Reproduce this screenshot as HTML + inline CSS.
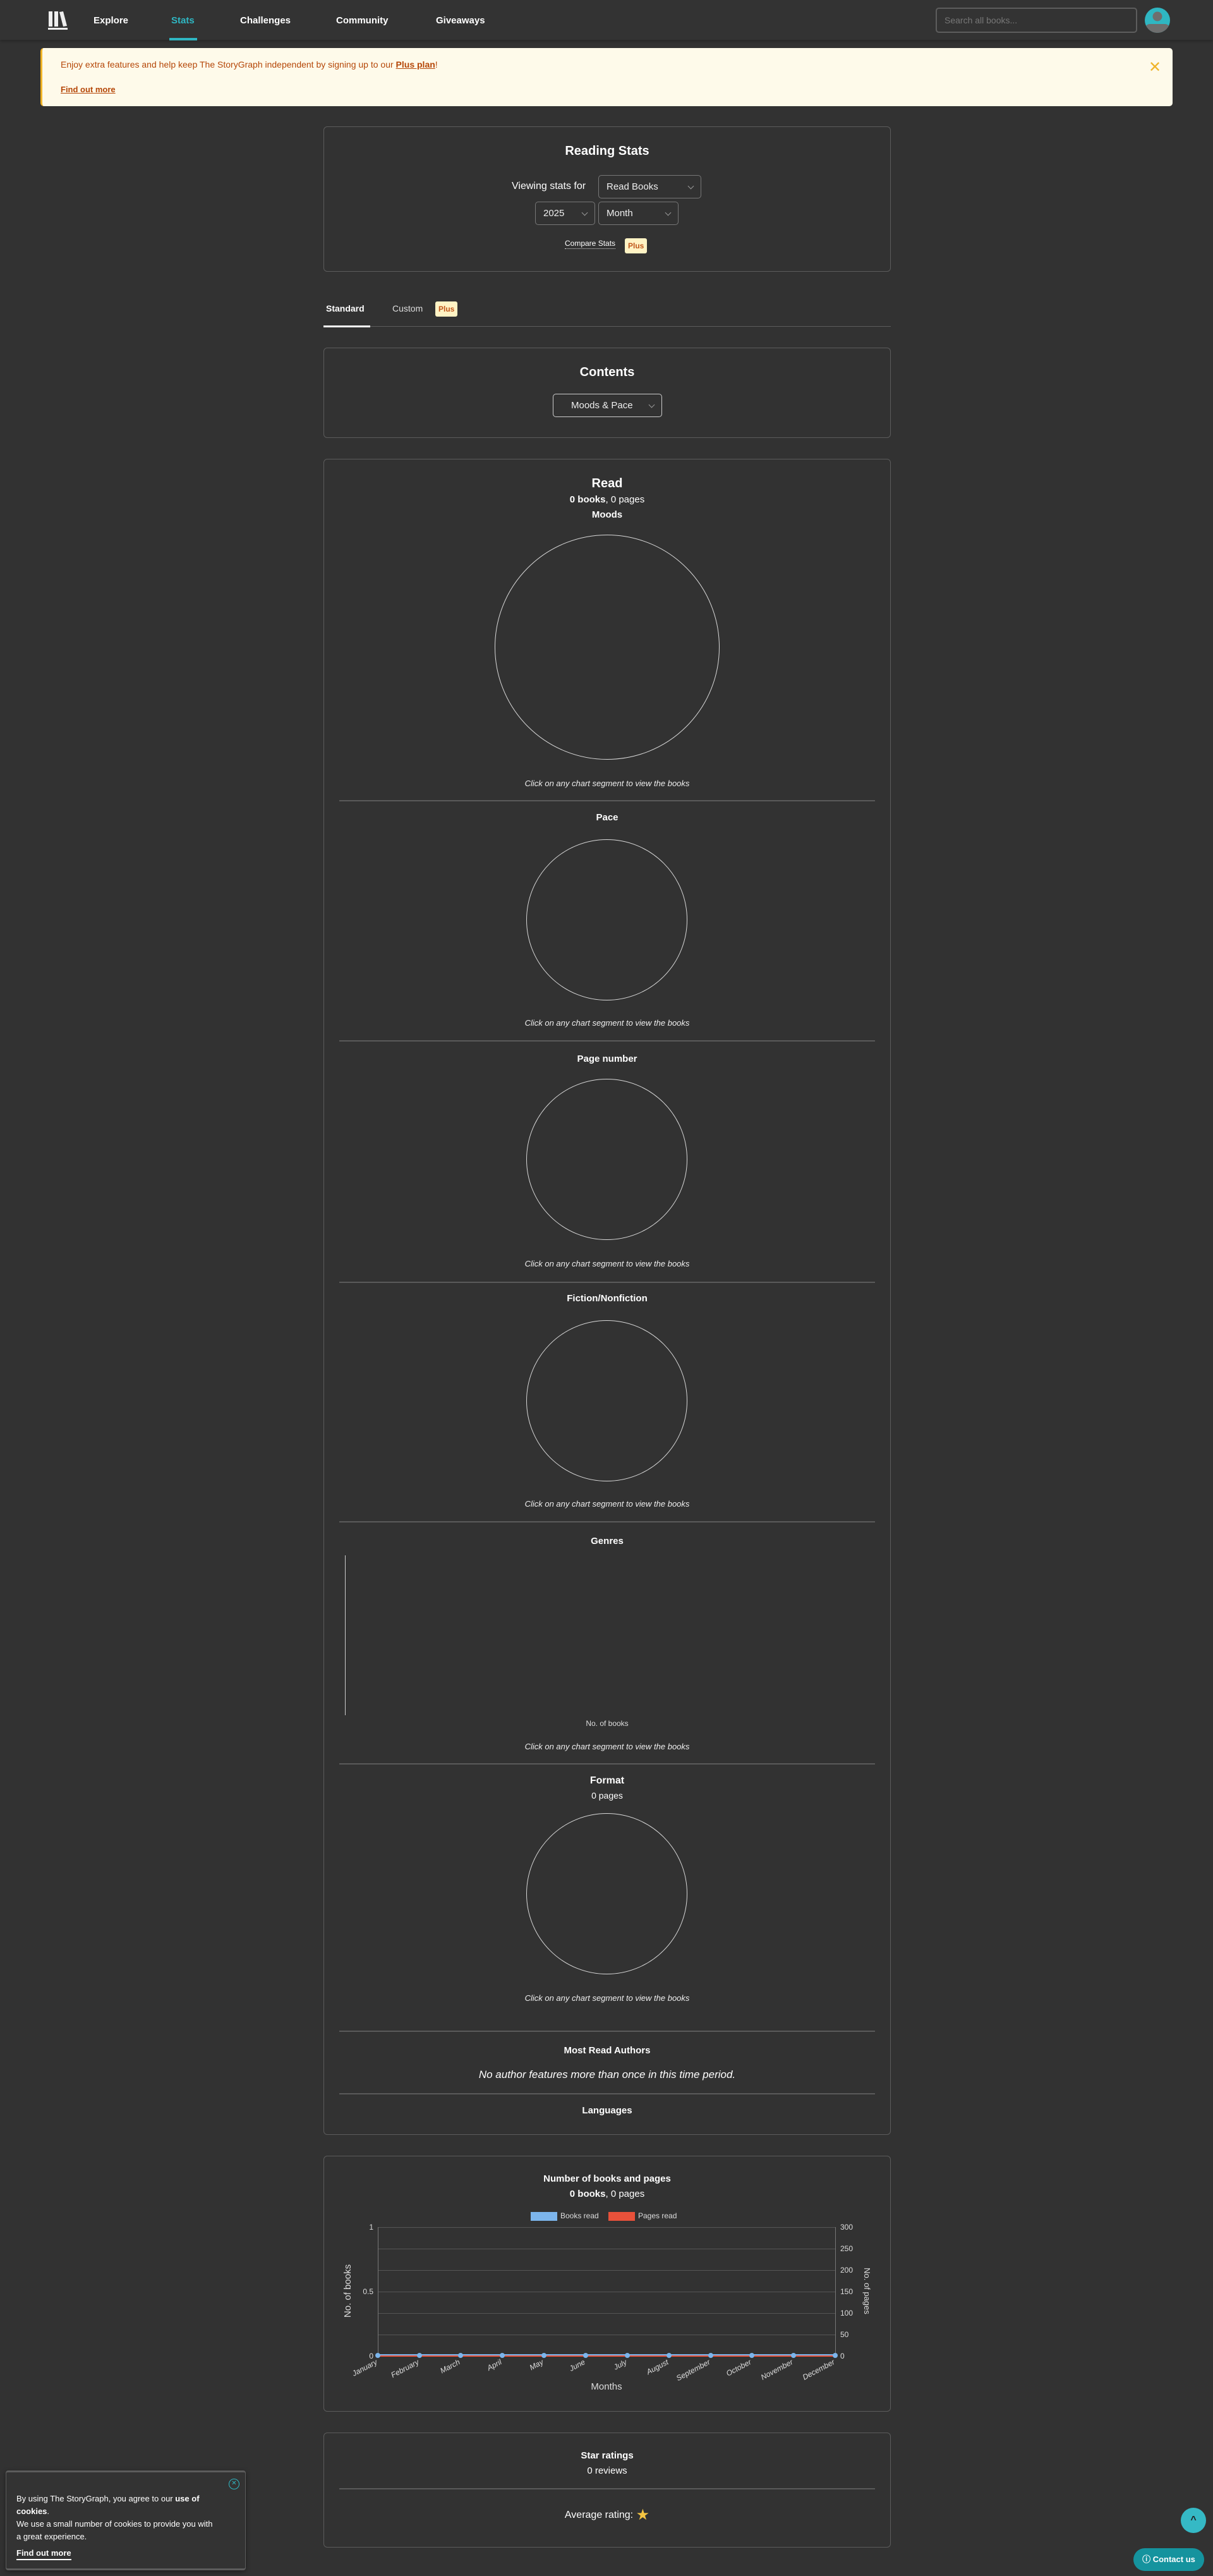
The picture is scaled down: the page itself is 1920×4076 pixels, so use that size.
<!DOCTYPE html>
<html><head><meta charset="utf-8"><style>
*{box-sizing:border-box;margin:0;padding:0}
body{width:1920px;height:4076px;background:#323232;font-family:"Liberation Sans",sans-serif;color:#fff;position:relative;overflow:hidden}
.a{position:absolute}
.c{position:absolute;left:512px;width:898px;text-align:center;line-height:20px;height:20px}
.b{font-weight:bold}
.box{position:absolute;left:512px;width:898px;border:1px solid #5c5c5c;border-radius:6px}
.hr{position:absolute;left:537px;width:848px;height:2px;background:#5a5a5a}
.sel{position:absolute;border:1px solid #777;border-radius:5px;height:37px;font-size:15px;line-height:35px;padding-left:12px;color:#eee}
.sel:after{content:"";position:absolute;right:12px;top:13px;width:6px;height:6px;border-right:1px solid #999;border-bottom:1px solid #999;transform:rotate(45deg)}
.plus{display:inline-block;background:#fff3c4;color:#c0561a;font-size:12px;font-weight:bold;border-radius:3px;padding:0 5px;line-height:24px;height:24px}
.circ{position:absolute;border:1.5px solid #d8d8d8;border-radius:50%}
.it{font-style:italic;font-size:13px;color:#eee}
</style></head><body>
<!-- nav -->
<div class="a" style="left:0;top:0;width:1920px;height:63px;background:#333;box-shadow:0 2px 4px rgba(0,0,0,.25)"></div>
<svg class="a" style="left:76px;top:17px" width="34" height="31" viewBox="0 0 34 31"><rect x="1" y="1" width="6" height="24" fill="#eee"/><rect x="10" y="1" width="6" height="24" fill="#eee"/><polygon points="18,2 24,1 30,24 24,25" fill="#eee"/><rect x="0" y="27" width="31" height="3" fill="#eee"/></svg>
<div class="a b" style="left:148px;top:24px;font-size:15px">Explore</div>
<div class="a b" style="left:271px;top:24px;font-size:15px;color:#2fb6c2">Stats</div>
<div class="a" style="left:268px;top:60px;width:44px;height:4px;background:#2fb6c2"></div>
<div class="a b" style="left:380px;top:24px;font-size:15px">Challenges</div>
<div class="a b" style="left:532px;top:24px;font-size:15px">Community</div>
<div class="a b" style="left:690px;top:24px;font-size:15px">Giveaways</div>
<div class="a" style="left:1481px;top:12px;width:319px;height:40px;border:2px solid #5d5d5d;border-radius:5px;font-size:14px;color:#777;padding:10px 12px">Search all books...</div>
<svg class="a" style="left:1812px;top:12px" width="40" height="40" viewBox="0 0 40 40"><defs><clipPath id="av"><circle cx="20" cy="20" r="20"/></clipPath></defs><circle cx="20" cy="20" r="20" fill="#2fb6c2"/><g clip-path="url(#av)"><circle cx="20" cy="14" r="7.5" fill="#6e6e6e"/><rect x="0" y="26" width="40" height="16" rx="8" fill="#6e6e6e"/></g></svg>
<!-- banner -->
<div class="a" style="left:64px;top:76px;width:1792px;height:92px;background:#fefaea;border-left:3px solid #f0b429;border-radius:5px"></div>
<div class="a" style="left:96px;top:94px;font-size:14px;color:#b54708">Enjoy extra features and help keep The StoryGraph independent by signing up to our <span style="text-decoration:underline;font-weight:bold">Plus plan</span>!</div>
<div class="a b" style="left:96px;top:134px;font-size:13px;color:#b54708;text-decoration:underline">Find out more</div>
<div class="a" style="left:1818px;top:92px;font-size:24px;color:#f0b429">✕</div>
<!-- reading stats -->
<div class="box" style="top:200px;height:230px"></div>
<div class="c b" style="top:228px;font-size:20px;line-height:22px">Reading Stats</div>
<div class="a" style="left:810px;top:286px;font-size:16px">Viewing stats for</div>
<div class="sel" style="left:947px;top:277px;width:163px">Read Books</div>
<div class="sel" style="left:847px;top:319px;width:95px">2025</div>
<div class="sel" style="left:947px;top:319px;width:127px">Month</div>
<div class="a" style="left:894px;top:377px;font-size:12px;border-bottom:1px dotted #ddd;line-height:16px">Compare Stats</div>
<div class="a" style="left:989px;top:377px"><span class="plus">Plus</span></div>
<!-- tabs -->
<div class="a b" style="left:516px;top:480px;font-size:14px">Standard</div>
<div class="a" style="left:621px;top:480px;font-size:14px;color:#ddd">Custom</div>
<div class="a" style="left:689px;top:477px"><span class="plus">Plus</span></div>
<div class="a" style="left:512px;top:516px;width:898px;height:1px;background:#5c5c5c"></div>
<div class="a" style="left:512px;top:515px;width:74px;height:3px;background:#fff"></div>
<!-- contents -->
<div class="box" style="top:550px;height:143px"></div>
<div class="c b" style="top:578px;font-size:20px;line-height:22px">Contents</div>
<div class="sel" style="left:875px;top:623px;width:173px;border-color:#ccc;padding-left:28px">Moods &amp; Pace</div>
<!-- read -->
<div class="box" style="top:726px;height:2652px"></div>
<div class="c b" style="top:754px;font-size:20px;line-height:22px">Read</div>
<div class="c" style="top:781px;font-size:15px"><b>0 books</b>, 0 pages</div>
<div class="c b" style="top:805px;font-size:15px">Moods</div>
<div class="circ" style="left:783px;top:846px;width:356px;height:356px"></div>
<div class="c it" style="top:1230px">Click on any chart segment to view the books</div>
<div class="hr" style="top:1266px"></div>
<div class="c b" style="top:1284px;font-size:15px">Pace</div>
<div class="circ" style="left:833px;top:1328px;width:255px;height:255px"></div>
<div class="c it" style="top:1609px">Click on any chart segment to view the books</div>
<div class="hr" style="top:1646px"></div>
<div class="c b" style="top:1666px;font-size:15px">Page number</div>
<div class="circ" style="left:833px;top:1707px;width:255px;height:255px"></div>
<div class="c it" style="top:1990px">Click on any chart segment to view the books</div>
<div class="hr" style="top:2028px"></div>
<div class="c b" style="top:2045px;font-size:15px">Fiction/Nonfiction</div>
<div class="circ" style="left:833px;top:2089px;width:255px;height:255px"></div>
<div class="c it" style="top:2370px">Click on any chart segment to view the books</div>
<div class="hr" style="top:2407px"></div>
<div class="c b" style="top:2429px;font-size:15px">Genres</div>
<div class="a" style="left:546px;top:2461px;width:1px;height:253px;background:#ccc"></div>
<div class="c" style="top:2717px;font-size:12px;color:#ddd">No. of books</div>
<div class="c it" style="top:2754px">Click on any chart segment to view the books</div>
<div class="hr" style="top:2790px"></div>
<div class="c b" style="top:2808px;font-size:16px">Format</div>
<div class="c" style="top:2831px;font-size:14px">0 pages</div>
<div class="circ" style="left:833px;top:2869px;width:255px;height:255px"></div>
<div class="c it" style="top:3152px">Click on any chart segment to view the books</div>
<div class="hr" style="top:3213px"></div>
<div class="c b" style="top:3235px;font-size:15px">Most Read Authors</div>
<div class="c" style="top:3272px;font-size:17px;font-style:italic;line-height:22px">No author features more than once in this time period.</div>
<div class="hr" style="top:3312px"></div>
<div class="c b" style="top:3330px;font-size:15px">Languages</div>
<!-- books & pages chart -->
<div class="box" style="top:3411px;height:405px"></div>
<div class="c b" style="top:3438px;font-size:15px">Number of books and pages</div>
<div class="c" style="top:3462px;font-size:15px"><b>0 books</b>, 0 pages</div>
<div class="a" style="left:840px;top:3500px;width:42px;height:14px;background:#7cb5ec"></div>
<div class="a" style="left:887px;top:3499px;font-size:12px;color:#ddd">Books read</div>
<div class="a" style="left:963px;top:3500px;width:42px;height:14px;background:#e8513a"></div>
<div class="a" style="left:1010px;top:3499px;font-size:12px;color:#ddd">Pages read</div>
<svg class="a" style="left:512px;top:3500px" width="898" height="300" viewBox="512 3500 898 300">
<g stroke="#555" stroke-width="1">
<line x1="598" y1="3524.5" x2="1322" y2="3524.5"/><line x1="598" y1="3558.5" x2="1322" y2="3558.5"/><line x1="598" y1="3592.5" x2="1322" y2="3592.5"/><line x1="598" y1="3626.5" x2="1322" y2="3626.5"/><line x1="598" y1="3660.5" x2="1322" y2="3660.5"/><line x1="598" y1="3694.5" x2="1322" y2="3694.5"/>
</g>
<line x1="598.5" y1="3524" x2="598.5" y2="3727" stroke="#777"/><line x1="1322.5" y1="3524" x2="1322.5" y2="3727" stroke="#777"/>
<line x1="598" y1="3728" x2="1322" y2="3728" stroke="#e8513a" stroke-width="2"/>
<line x1="598" y1="3726" x2="1322" y2="3726" stroke="#7cb5ec" stroke-width="2"/>
<g fill="#7cb5ec"><circle cx="598" cy="3727" r="4"/><circle cx="664" cy="3727" r="4"/><circle cx="729" cy="3727" r="4"/><circle cx="795" cy="3727" r="4"/><circle cx="861" cy="3727" r="4"/><circle cx="927" cy="3727" r="4"/><circle cx="993" cy="3727" r="4"/><circle cx="1059" cy="3727" r="4"/><circle cx="1125" cy="3727" r="4"/><circle cx="1190" cy="3727" r="4"/><circle cx="1256" cy="3727" r="4"/><circle cx="1322" cy="3727" r="4"/></g>
<g fill="#ddd" font-family="Liberation Sans" font-size="12">
<text x="591" y="3528" text-anchor="end">1</text><text x="591" y="3630" text-anchor="end">0.5</text><text x="591" y="3732" text-anchor="end">0</text>
<text x="1330" y="3528">300</text><text x="1330" y="3562">250</text><text x="1330" y="3596">200</text><text x="1330" y="3630">150</text><text x="1330" y="3664">100</text><text x="1330" y="3698">50</text><text x="1330" y="3732">0</text>
<text transform="translate(555,3625) rotate(-90)" text-anchor="middle" font-size="15">No. of books</text>
<text transform="translate(1368,3625) rotate(90)" text-anchor="middle" font-size="13">No. of pages</text>
<text x="960" y="3781" text-anchor="middle" font-size="15">Months</text>
<g font-style="italic" text-anchor="end">
<text transform="translate(598,3740) rotate(-28)">January</text><text transform="translate(664,3740) rotate(-28)">February</text><text transform="translate(729,3740) rotate(-28)">March</text><text transform="translate(795,3740) rotate(-28)">April</text><text transform="translate(861,3740) rotate(-28)">May</text><text transform="translate(927,3740) rotate(-28)">June</text><text transform="translate(993,3740) rotate(-28)">July</text><text transform="translate(1059,3740) rotate(-28)">August</text><text transform="translate(1125,3740) rotate(-28)">September</text><text transform="translate(1190,3740) rotate(-28)">October</text><text transform="translate(1256,3740) rotate(-28)">November</text><text transform="translate(1322,3740) rotate(-28)">December</text>
</g></g></svg>
<!-- star ratings -->
<div class="box" style="top:3849px;height:182px"></div>
<div class="c b" style="top:3876px;font-size:15px">Star ratings</div>
<div class="c" style="top:3900px;font-size:15px">0 reviews</div>
<div class="hr" style="top:3937px"></div>
<div class="c" style="top:3970px;font-size:16px">Average rating: <span style="color:#f5c542;font-size:24px;vertical-align:-3px">★</span></div>
<!-- cookie -->
<div class="a" style="left:9px;top:3909px;width:380px;height:158px;background:#333;border:1px solid #5c5c5c;border-top:3px solid #5c5c5c;border-bottom:3px solid #5c5c5c;border-radius:4px;box-shadow:0 2px 8px rgba(0,0,0,.4)"></div>
<div class="a" style="left:362px;top:3922px;width:17px;height:17px;border:1.5px solid #2fb6c2;border-radius:50%;color:#2fb6c2;font-size:10px;text-align:center;line-height:14px">✕</div>
<div class="a" style="left:26px;top:3944px;width:320px;font-size:13px;line-height:20px">By using The StoryGraph, you agree to our <b>use of cookies</b>.<br>We use a small number of cookies to provide you with a great experience.</div>
<div class="a b" style="left:26px;top:4031px;font-size:13px;border-bottom:2px solid #fff;line-height:18px">Find out more</div>
<!-- float buttons -->
<div class="a" style="left:1869px;top:3968px;width:40px;height:40px;border-radius:50%;background:#35b9c5;color:#222;font-size:16px;font-weight:bold;text-align:center;line-height:40px">^</div>
<div class="a b" style="left:1794px;top:4032px;width:112px;height:36px;border-radius:18px;background:#15939e;font-size:13px;line-height:36px;text-align:center">ⓘ Contact us</div>
</body></html>
